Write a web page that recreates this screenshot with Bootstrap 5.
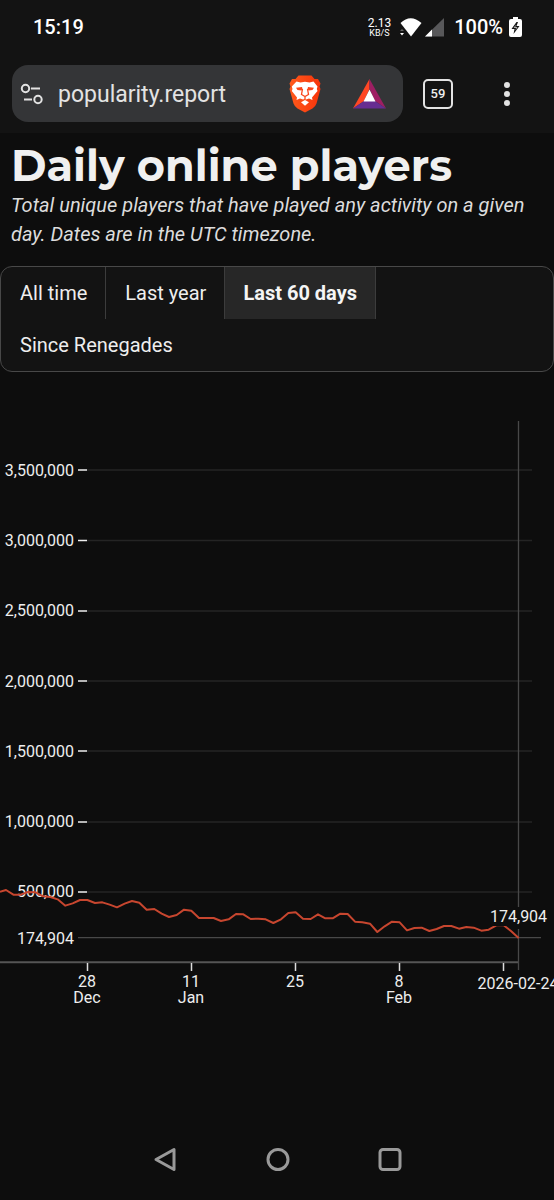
<!DOCTYPE html>
<html lang="en">
<head>
<meta charset="utf-8">
<meta name="viewport" content="width=device-width, initial-scale=1">
<title>Daily online players</title>
<link href="https://cdn.jsdelivr.net/npm/bootstrap@5.3.0/dist/css/bootstrap.min.css" rel="stylesheet">
<style>
  body { background: #0d0d0d; color: #eee; font-family: Roboto, "Liberation Sans", sans-serif; }
  button { font-family: inherit; color: inherit; }
  .chrome-top { background: #131313; height: 133px; }
  .status-bar { height: 53px; padding: 0 32px 0 33px; font-size: 20px; font-weight: 500; color: #fff; }
  .net-speed { font-size: 12px; line-height: 12px; font-weight: 400; }
  .net-speed span { font-size: 9px; line-height: 8px; }
  .battery-text { margin: 0 6px 0 9px; }
  .tool-bar { padding: 12px 12px 0; }
  .url-box { background: #343537; border-radius: 16px; height: 57px; padding: 0 17px 0 8px; max-width: 391px; }
  .url-box input { background: none; border: 0; outline: 0; color: #e3e3e3; font-size: 23px; min-width: 0; padding: 3px 0 0; margin-left: 13px; }
  .plain-btn { background: none; border: 0; padding: 0; display: flex; }
  .rewards-btn { margin-left: 32px; }
  .tab-count { border: 2px solid #e3e3e3; border-radius: 5px; width: 30px; height: 30px; font-size: 13px; font-weight: 500; align-items: center; justify-content: center; margin-left: 20px; }
  .menu-btn { margin: 0 31px 0 auto; }
  .page-head { padding: 11px 12px 0 11px; }
  .page-head h1 { font-family: Montserrat, Inter, sans-serif; font-size: 43px; line-height: 44px; font-weight: 700; margin: 0; color: #f0f0f0; }
  .page-head p { font-size: 20px; line-height: 29px; font-style: italic; color: #dcdcdc; margin: 3px 0 17px; }
  .range-tabs { border: 1px solid #484848; border-radius: 12px; background: #131313; }
  .range-tabs button { border: 0; border-right: 1px solid #3c3c3c; background: none; font-size: 20px; line-height: 24px; padding: 14px 18px 14px 19px; }
  .range-tabs button:last-child { border-right: 0; }
  .range-tabs .active { background: #272727; font-weight: 700; color: #f5f5f5; padding-left: 18px; }
  .chart { margin-top: 28px; }
  .chart text { font-size: 16px; fill: #eee; }
  .nav-keys { height: 80px; padding: 0 148px 0 149px; }
</style>
</head>
<body class="d-flex flex-column min-vh-100">
<header class="chrome-top">
  <div class="status-bar d-flex align-items-center">
    <span>15:19</span>
    <div class="net-speed d-flex flex-column align-items-center ms-auto">2.13<span>KB/S</span></div>
    <svg class="ms-2" width="46" height="22" viewBox="0 0 46 22" aria-hidden="true">
      <path d="M1.500 7q10-9.500 21 0L12 20.500z" fill="#fff"/>
      <path d="M0 13h6v7H0z" fill="#131313"/><path d="M3 13l2 2H1z" fill="#666"/><path d="M1 17h4l-2 2.500z" fill="#fff"/>
      <path d="M26 20.500L45 2v18.500z" fill="#58585a"/><path d="M26 20.500l7-7v7z" fill="#fff"/>
    </svg>
    <span class="battery-text">100%</span>
    <svg width="13" height="20" viewBox="0 0 13 20" aria-hidden="true">
      <path d="M4 0h5v2h2q2 0 2 2v14q0 2-2 2H2q-2 0-2-2V4q0-2 2-2h2z" fill="#fff"/><path d="M7.500 5L2.500 12h3L4.500 17l6-8H7.500L9 5z" fill="#131313"/><path d="M7 7.500L4.500 11H7l-.6 2.500L8.500 10H6.300z" fill="#aaa"/>
    </svg>
  </div>
  <div class="tool-bar d-flex align-items-center">
    <div class="url-box d-flex align-items-center flex-grow-1">
      <button class="plain-btn" aria-label="Site settings">
        <svg width="25" height="24" viewBox="0 0 25 24" fill="none" stroke="#e3e3e3" stroke-width="2"><circle cx="5.500" cy="6.500" r="3.700"/><path d="M11 6.500h9M4 17.500h8"/><circle cx="18" cy="17.500" r="3.700"/></svg>
      </button>
      <input class="flex-grow-1" type="text" value="popularity.report" aria-label="Address">
      <button class="plain-btn" aria-label="Brave Shields">
        <svg width="32" height="38" viewBox="0 0 32 38">
          <defs><linearGradient id="lion"><stop stop-color="#ff5a1c"/><stop offset="1" stop-color="#f6340b"/></linearGradient></defs>
          <path d="M9.500.5h13l3 3.500h3.500l2.500 4.500-1 3 1 2.500-4 14.500q-1 3-4 5L16 37.500l-7.500-4q-3-2-4-5L.5 14l1-2.500-1-3L3 4h3.500z" fill="url(#lion)"/>
          <path d="M7.500 6.500l4 1L16 6.800l4.500.7 4-1 4 5-.7 2.500.7 2-5.500 6.500.5 2.500-3.500-1.500-3 1-1.500-.5-1.500.5-3-1L7.500 25l.5-2.500L2.800 16l.7-2-.7-2.500z" fill="#fff"/>
          <path d="M16 25l4 2.200-4 3.500-4-3.500z" fill="#fff"/>
          <path d="M7 12.800l6-.8.5 2-1 1.500-4-.5zM25 12.800l-6-.8-.5 2 1 1.500 4-.5z" fill="#fa461b"/>
          <path d="M13.500 14l-1 5.500 3.500 2 3.500-2-1-5.500M16 21.500v3" fill="none" stroke="#fa461b" stroke-width="1.300"/>
        </svg>
      </button>
      <button class="plain-btn rewards-btn" aria-label="Brave Rewards">
        <svg width="33" height="30" viewBox="0 0 33 30"><path d="M16.500 0v10L11 22 0 29.500z" fill="#ff4724"/><path d="M16.500 0L33 29.500 22 22 16.500 10z" fill="#9e1f63"/><path d="M0 29.500L11 22h11l11 7.500z" fill="#662d91"/><path d="M16.500 10.500L22.500 22.500h-12z" fill="#fff"/></svg>
      </button>
    </div>
    <button class="plain-btn tab-count" aria-label="59 tabs">59</button>
    <button class="plain-btn menu-btn" aria-label="Menu">
      <svg width="8" height="24" viewBox="0 0 8 24" fill="#e3e3e3"><circle cx="4" cy="3" r="3"/><circle cx="4" cy="12" r="3"/><circle cx="4" cy="21" r="3"/></svg>
    </button>
  </div>
</header>

<main class="flex-grow-1">
  <div class="page-head">
    <h1>Daily online players</h1>
    <p>Total unique players that have played any activity on a given day. Dates are in the UTC timezone.</p>
  </div>
  <div class="range-tabs d-flex flex-wrap overflow-hidden" role="group" aria-label="Range">
    <button>All time</button><button>Last year</button><button class="active">Last 60 days</button><button>Since Renegades</button>
  </div>
  <svg class="chart d-block w-100" viewBox="0 0 554 620" role="img" aria-label="Daily online players, last 60 days">
    <g stroke="#242424" stroke-width="1.300"><path d="M87 70H532M87 140.500H532M87 211H532M87 281H532M87 351H532M87 422H532M87 492H532"/></g>
    <g stroke="#eee" stroke-width="1.500"><path d="M78 70h9M78 140.500h9M78 211h9M78 281h9M78 351h9M78 422h9M78 492h9"/></g>
    <g text-anchor="end">
      <text x="74" y="76">3,500,000</text><text x="74" y="146">3,000,000</text><text x="74" y="216">2,500,000</text>
      <text x="74" y="287">2,000,000</text><text x="74" y="357">1,500,000</text><text x="74" y="427">1,000,000</text>
      <text x="74" y="497">500,000</text><text x="74" y="544">174,904</text>
    </g>
    <path d="M0 562.300H519" stroke="#555" stroke-width="2"/>
    <path d="M78 537.700H541" stroke="#484848" stroke-width="1.300"/>
    <path d="M518.500 21V507M518.500 529V570" stroke="#484848" stroke-width="1.300"/>
    <path d="M87.500 563v8M191.500 563v8M295.500 563v8M399.500 563v8M503.500 563v8" stroke="#ddd" stroke-width="1.500"/>
    <g transform="translate(0 460) scale(.33333)">
      <polyline fill="none" stroke="#c7462f" stroke-width="6" stroke-linejoin="round" points="0,95 18,90 40,104 62,104 84,96 107,97 129,109 151,111 173,118 196,137 218,130 240,120 262,120 285,129 307,127 329,134 351,142 374,131 396,123 418,128 440,149 463,147 485,161 507,171 530,165 552,149 574,152 597,174 619,174 641,174 663,183 686,178 708,162 730,163 752,177 775,176 797,178 820,189 843,178 865,159 887,157 909,176 932,177 954,163 976,175 998,175 1021,161 1043,162 1065,185 1087,187 1110,191 1132,216 1154,199 1176,185 1199,187 1221,211 1243,204 1265,203 1288,213 1310,207 1332,198 1354,198 1377,206 1399,201 1421,203 1444,212 1466,209 1489,196 1511,196 1533,213 1556,234"/>
    </g>
    <path d="M489 507h59v19h-59z" fill="#0d0d0d"/>
    <text x="490" y="522">174,904</text>
    <g text-anchor="middle">
      <text x="87" y="587">28</text><text x="87" y="603">Dec</text><text x="191" y="587">11</text><text x="191" y="603">Jan</text>
      <text x="295" y="587">25</text><text x="399" y="587">8</text><text x="399" y="603">Feb</text><text x="518" y="589">2026-02-24</text>
    </g>
  </svg>
</main>

<footer class="nav-keys d-flex align-items-center justify-content-between">
  <button class="plain-btn" aria-label="Back"><svg width="32" height="32" viewBox="0 0 32 32" fill="none" stroke="#999" stroke-width="3" stroke-linejoin="round"><path d="M7 15.500L25 5.500v20z"/></svg></button>
  <button class="plain-btn" aria-label="Home"><svg width="32" height="32" viewBox="0 0 32 32" fill="none" stroke="#999" stroke-width="3"><circle cx="16" cy="15.500" r="10"/></svg></button>
  <button class="plain-btn" aria-label="Recents"><svg width="32" height="32" viewBox="0 0 32 32" fill="none" stroke="#999" stroke-width="3"><rect x="6" y="5.500" width="20" height="20" rx="3"/></svg></button>
</footer>
<script src="https://cdn.jsdelivr.net/npm/bootstrap@5.3.0/dist/js/bootstrap.bundle.min.js"></script>
</body>
</html>
